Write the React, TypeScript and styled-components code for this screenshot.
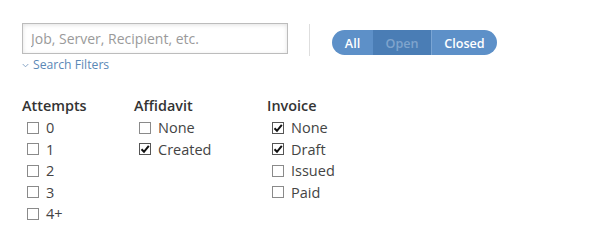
import { FC } from 'react';
import { styled, createGlobalStyle } from 'styled-components';

const GlobalStyle = createGlobalStyle`
  body {
    margin: 0;
    background: #fff;
    font-family: 'Open Sans', 'Liberation Sans', sans-serif;
  }
`;

type Group = { title: string; width: number; items: { label: string; checked?: boolean }[] };

const groups: Group[] = [
  {
    title: 'Attempts',
    width: 112,
    items: [{ label: '0' }, { label: '1' }, { label: '2' }, { label: '3' }, { label: '4+' }],
  },
  {
    title: 'Affidavit',
    width: 133,
    items: [{ label: 'None' }, { label: 'Created', checked: true }],
  },
  {
    title: 'Invoice',
    width: 120,
    items: [
      { label: 'None', checked: true },
      { label: 'Draft', checked: true },
      { label: 'Issued' },
      { label: 'Paid' },
    ],
  },
];

const CheckBox: FC<{ checked?: boolean }> = ({ checked }) => (
  <Box $checked={checked}>
    {checked && (
      <svg width="10" height="10" viewBox="0 0 10 10">
        <path d="M1.5 5.2 L4 7.8 L8.8 1.8" fill="none" stroke="#111" strokeWidth="2" />
      </svg>
    )}
  </Box>
);

const App: FC = () => {
  return (
    <>
      <GlobalStyle />
      <Page>
        <TopBar>
          <SearchArea>
            <SearchInput placeholder="Job, Server, Recipient, etc." />
            <FiltersLink>
              <Chevron viewBox="0 0 8 5">
                <path d="M0.8 0.8 L4 4 L7.2 0.8" fill="none" stroke="#7a9cc0" strokeWidth="1" />
              </Chevron>
              Search Filters
            </FiltersLink>
          </SearchArea>
          <Divider />
          <Toggle>
            <ToggleItem $width={41}>All</ToggleItem>
            <ToggleItem $width={58} $active>
              Open
            </ToggleItem>
            <ToggleItem $width={66} $sep>
              Closed
            </ToggleItem>
          </Toggle>
        </TopBar>
        <Groups>
          {groups.map((g) => (
            <Column key={g.title} $width={g.width}>
              <Heading>{g.title}</Heading>
              {g.items.map((it) => (
                <Option key={it.label}>
                  <CheckBox checked={it.checked} />
                  {it.label}
                </Option>
              ))}
            </Column>
          ))}
        </Groups>
      </Page>
    </>
  );
};

export default App;

const Page = styled.div`
  padding: 23px 22px;
`;

const TopBar = styled.div`
  display: flex;
  align-items: flex-start;
`;

const SearchArea = styled.div`
  display: flex;
  flex-direction: column;
`;

const SearchInput = styled.input`
  box-sizing: border-box;
  width: 266px;
  height: 31px;
  border: 1px solid #bcbcbc;
  box-shadow: inset 0 1px 4px rgba(0, 0, 0, 0.12);
  padding: 0 8px;
  font-family: 'Open Sans', 'Liberation Sans', sans-serif;
  font-size: 14px;
  color: #333;
  outline: none;
  &::placeholder {
    color: #9a9a9a;
  }
`;

const FiltersLink = styled.a`
  display: flex;
  align-items: center;
  gap: 4px;
  margin-top: 2px;
  font-size: 12.2px;
  line-height: 17px;
  color: #5b88b6;
  cursor: pointer;
`;

const Chevron = styled.svg`
  width: 7px;
  height: 5px;
  margin-top: 1px;
`;

const Divider = styled.div`
  width: 1px;
  height: 32px;
  background: #dedede;
  margin: 1px 22px 0 21px;
`;

const Toggle = styled.div`
  display: flex;
  margin-top: 7px;
  height: 25px;
  border-radius: 13px;
  overflow: hidden;
`;

const ToggleItem = styled.div<{ $width: number; $active?: boolean; $sep?: boolean }>`
  width: ${(p) => p.$width}px;
  display: flex;
  align-items: center;
  justify-content: center;
  padding-top: 1px;
  font-size: 12.6px;
  font-weight: 600;
  background: ${(p) => (p.$active ? '#4a7db5' : '#5d90c8')};
  color: ${(p) => (p.$active ? '#7fa4cd' : '#fff')};
  border-left: ${(p) => (p.$sep ? '1px solid #7aa5d4' : 'none')};
  box-sizing: border-box;
`;

const Groups = styled.div`
  display: flex;
  margin-top: 23px;
`;

const Column = styled.div<{ $width: number }>`
  width: ${(p) => p.$width}px;
  display: flex;
  flex-direction: column;
`;

const Heading = styled.div`
  font-size: 14.4px;
  font-weight: 600;
  color: #333;
  line-height: 20px;
  margin-bottom: 1px;
`;

const Option = styled.label`
  display: flex;
  align-items: center;
  gap: 7px;
  padding-left: 5px;
  height: 21.5px;
  font-size: 14.5px;
  color: #444;
`;

const Box = styled.span<{ $checked?: boolean }>`
  box-sizing: border-box;
  width: 12px;
  height: 12px;
  border: 1px solid ${(p) => (p.$checked ? '#555' : '#8a8a8a')};
  background: #fff;
  display: flex;
  align-items: center;
  justify-content: center;
`;
